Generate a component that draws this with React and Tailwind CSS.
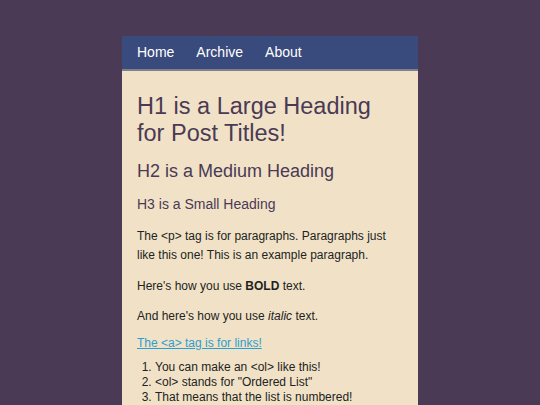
export default function App() {
  return (
    <div className="min-h-[405px] w-full bg-[#4a3a55] pt-[36px]" style={{ fontFamily: '"Liberation Sans", Arial, sans-serif' }}>
      <div className="mx-auto w-[296px]">
        <nav className="box-content flex h-[33px] items-center gap-[22px] border-b-2 border-[#80808a] bg-[#394a7c] px-[15px] text-[14px] leading-[21px] text-white">
          <a>Home</a>
          <a>Archive</a>
          <a>About</a>
        </nav>
        <main className="bg-[#f1e2c7] px-[15px] pt-[21.5px] pb-4 text-[#222]">
          <h1 className="text-[23.5px] leading-[27px] text-[#4a3a55]">H1 is a Large Heading for Post Titles!</h1>
          <h2 className="mt-[13px] text-[18px] leading-[22px] text-[#4a3a55]">H2 is a Medium Heading</h2>
          <h3 className="mt-[13px] text-[14px] leading-[18px] text-[#4a3a55]">H3 is a Small Heading</h3>
          <p className="mt-[14px] text-[12px] leading-[19.5px]">The &lt;p&gt; tag is for paragraphs. Paragraphs just like this one! This is an example paragraph.</p>
          <p className="mt-[11.5px] text-[12px] leading-[19.5px]">Here's how you use <b>BOLD</b> text.</p>
          <p className="mt-[10px] text-[12px] leading-[19.5px]">And here's how you use <i>italic</i> text.</p>
          <p className="mt-[7.5px] text-[12px] leading-[19.5px]"><a className="text-[#2a9fd0] underline">The &lt;a&gt; tag is for links!</a></p>
          <ol className="mt-[7px] list-decimal pl-[18px] text-[12px] leading-[15px]">
            <li>You can make an &lt;ol&gt; like this!</li>
            <li>&lt;ol&gt; stands for "Ordered List"</li>
            <li>That means that the list is numbered!</li>
          </ol>
        </main>
      </div>
    </div>
  );
}
